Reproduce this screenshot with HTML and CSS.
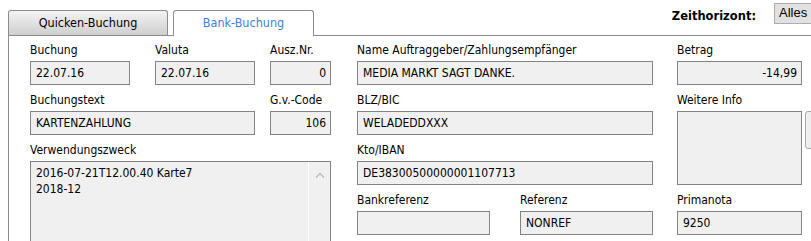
FILE: index.html
```html
<!DOCTYPE html>
<html lang="de">
<head>
  <meta charset="UTF-8" />
  <title>Bank-Buchung</title>
  <link rel="stylesheet" href="styles.css">
</head>
<body>

<!-- Tabs + Zeithorizont -->
<div class="top">
  <div class="tabs">
    <div class="tab">Quicken-Buchung</div>
    <div class="tab active">Bank-Buchung</div>
  </div>
  <div class="horizon">
    <span class="horizon-label">Zeithorizont:</span>
    <div class="select">Alles</div>
  </div>
</div>

<!-- Buchungsdetails -->
<div class="panel">
  <div class="col col-left">
    <div class="row">
      <div class="field w100">
        <label>Buchung</label>
        <div class="input">22.07.16</div>
      </div>
      <div class="field w100 gap-l">
        <label>Valuta</label>
        <div class="input">22.07.16</div>
      </div>
      <div class="field w61 gap-s">
        <label>Ausz.Nr.</label>
        <div class="input num">0</div>
      </div>
    </div>
    <div class="row">
      <div class="field w225">
        <label>Buchungstext</label>
        <div class="input">KARTENZAHLUNG</div>
      </div>
      <div class="field w61 gap-s">
        <label>G.v.-Code</label>
        <div class="input num">106</div>
      </div>
    </div>
    <div class="field">
      <label>Verwendungszweck</label>
      <div class="memo memo-big">
        <div class="memo-text">2016-07-21T12.00.40 Karte7<br>2018-12</div>
        <div class="memo-scroll">
          <svg width="10" height="6" viewBox="0 0 10 6"><polyline points="1,5.5 5,1.5 9,5.5" fill="none" stroke="#bcbcbc" stroke-width="1.4"/></svg>
        </div>
      </div>
    </div>
  </div>

  <div class="col col-mid">
    <div class="field">
      <label>Name Auftraggeber/Zahlungsempfänger</label>
      <div class="input">MEDIA MARKT SAGT DANKE.</div>
    </div>
    <div class="field">
      <label>BLZ/BIC</label>
      <div class="input">WELADEDDXXX</div>
    </div>
    <div class="field">
      <label>Kto/IBAN</label>
      <div class="input">DE38300500000001107713</div>
    </div>
    <div class="row">
      <div class="field w133">
        <label>Bankreferenz</label>
        <div class="input"></div>
      </div>
      <div class="field w133 gap-ref">
        <label>Referenz</label>
        <div class="input">NONREF</div>
      </div>
    </div>
  </div>

  <div class="col col-right">
    <div class="field">
      <label>Betrag</label>
      <div class="input num">-14,99</div>
    </div>
    <div class="field">
      <label>Weitere Info</label>
      <div class="info-row">
        <div class="memo memo-info"></div>
        <div class="side-btn"></div>
      </div>
    </div>
    <div class="field">
      <label>Primanota</label>
      <div class="input">9250</div>
    </div>
  </div>
</div>

</body>
</html>
```

FILE: styles.css
```css
html, body {
  margin: 0;
  background: #ffffff;
  color: #000000;
  font-family: 'DejaVu Sans Condensed', 'DejaVu Sans', sans-serif;
  font-size: 12px;
  overflow: hidden;
}

.top {
  display: flex;
  justify-content: space-between;
  height: 35px;
  padding-left: 8px;
}

.tabs {
  display: flex;
  align-items: flex-end;
  gap: 5px;
}

.tab {
  box-sizing: border-box;
  width: 160px;
  height: 25px;
  border: 1px solid #8c8c8c;
  border-bottom: none;
  border-radius: 3px 3px 0 0;
  background: linear-gradient(#f3f3f3, #cfcfcf);
  text-align: center;
  line-height: 24px;
  font-size: 12.5px;
}

.tab.active {
  width: 141px;
  height: 26px;
  margin-bottom: -1px;
  position: relative;
  background: #ffffff;
  color: #3b7fd6;
}

.horizon {
  display: flex;
  align-items: flex-start;
  margin-right: -20px;
}

.horizon-label {
  font-family: 'DejaVu Sans', sans-serif;
  font-size: 11.5px;
  font-weight: bold;
  margin-top: 9px;
  margin-right: 18px;
}

.select {
  box-sizing: border-box;
  width: 57px;
  height: 21px;
  margin-top: 3px;
  padding-left: 4px;
  border: 1px solid #adadad;
  background: #e1e1e1;
  font-family: 'Liberation Sans', sans-serif;
  font-size: 13px;
  line-height: 18px;
}

.panel {
  display: flex;
  gap: 26px;
  margin-left: 8px;
  padding: 7px 0 0 21px;
  border-top: 1px solid #8c8c8c;
  border-left: 1px solid #8c8c8c;
}

.col {
  display: flex;
  flex-direction: column;
  gap: 8px;
}

.col-left { width: 301px; }
.col-mid { width: 296px; }
.col-right { width: 125px; margin-left: -2px; }

.row {
  display: flex;
}

.field {
  display: flex;
  flex-direction: column;
}

.w100 { width: 100px; }
.w61 { width: 61px; }
.w225 { width: 225px; }
.w133 { width: 133px; }
.gap-l { margin-left: 25px; }
.gap-s { margin-left: 15px; }
.gap-ref { margin-left: 30px; }

label {
  line-height: 14px;
  margin-bottom: 4px;
  white-space: nowrap;
}

.input {
  box-sizing: border-box;
  height: 24px;
  padding: 0 5px;
  border: 1px solid #838383;
  background: #f0f0f0;
  line-height: 22px;
  white-space: nowrap;
}

.input.num {
  text-align: right;
  padding-right: 4px;
}

.memo {
  box-sizing: border-box;
  border: 1px solid #838383;
  background: #f0f0f0;
}

.memo-big {
  display: flex;
  height: 81px;
}

.memo-text {
  flex: 1;
  padding: 3px 5px;
  line-height: 16px;
}

.memo-scroll {
  width: 22px;
  border-left: 1px solid #ffffff;
  display: flex;
  justify-content: center;
  padding-top: 10px;
  box-sizing: border-box;
}

.memo-scroll svg {
  display: block;
}

.info-row {
  display: flex;
  align-items: flex-start;
}

.memo-info {
  flex: none;
  width: 125px;
  height: 74px;
}

.side-btn {
  flex: none;
  box-sizing: border-box;
  width: 20px;
  height: 38px;
  margin-left: 3px;
  border: 1px solid #a6a6a6;
  border-radius: 3px;
  background: linear-gradient(to right, #f2f2f2, #d6d6d6);
}
```
